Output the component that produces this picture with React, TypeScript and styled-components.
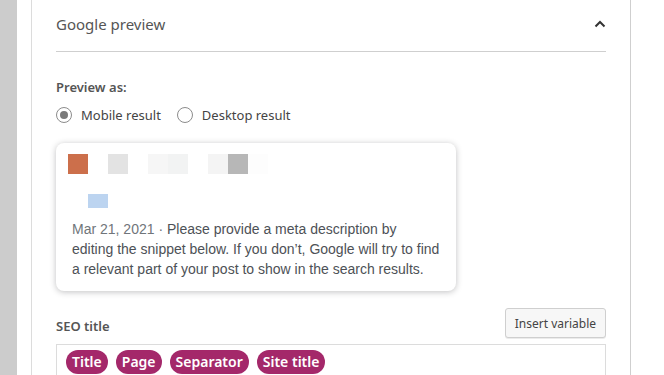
import React from "react";
import styled, { createGlobalStyle } from "styled-components";

const Global = createGlobalStyle`
  html, body { margin: 0; padding: 0; background: #fff; }
  body { font-family: "Noto Sans", "Open Sans", sans-serif; }
`;

const Page = styled.div`
  display: flex;
  height: 375px;
  overflow: hidden;
  background: #fff;
`;

const SideBar = styled.div`
  width: 17px;
  flex: none;
  background: #cccccc;
`;

const Gap = styled.div`
  width: 14px;
  flex: none;
`;

const Panel = styled.div`
  flex: none;
  border-left: 1px solid #dcdcdc;
  border-right: 1px solid #cfcfcf;
  padding: 0 24px;
  box-sizing: content-box;
  width: 550px;
`;

const Header = styled.div`
  height: 48px;
  display: flex;
  align-items: center;
  justify-content: space-between;
  border-bottom: 1px solid #cfcfcf;
  padding-bottom: 3px;
`;

const HeaderTitle = styled.h2`
  margin: 0;
  font-size: 15px;
  font-weight: 400;
  color: #555;
`;

const Label = styled.div`
  font-size: 13px;
  font-weight: 600;
  color: #555;
  line-height: 18px;
`;

const Section = styled.div<{ $top: number }>`
  margin-top: ${(p) => p.$top}px;
`;

const RadioRow = styled.div`
  display: flex;
  align-items: center;
  height: 20px;
  margin-top: 9px;
  gap: 16px;
`;

const RadioOption = styled.label`
  display: flex;
  align-items: center;
  gap: 9px;
  font-size: 13px;
  color: #444;
`;

const RadioCircle = styled.span<{ $checked?: boolean }>`
  width: 14px;
  height: 14px;
  border-radius: 50%;
  border: 1px solid #8c8c8c;
  display: flex;
  align-items: center;
  justify-content: center;
  &::after {
    content: "";
    width: 8px;
    height: 8px;
    border-radius: 50%;
    background: ${(p) => (p.$checked ? "#7a7a7a" : "transparent")};
  }
`;

const Card = styled.div`
  margin-top: 18px;
  width: 400px;
  box-sizing: border-box;
  border-radius: 8px;
  box-shadow: 0 1px 6px rgba(32, 33, 36, 0.28);
  padding: 11px 16px 12px 12px;
`;

const BlurRow = styled.div`
  display: flex;
  height: 20px;
`;

const Blur = styled.span<{ $c: string; $w?: number; $h?: number }>`
  width: ${(p) => p.$w ?? 20}px;
  height: ${(p) => p.$h ?? 20}px;
  background: ${(p) => p.$c};
  flex: none;
`;

const BlurRow2 = styled.div`
  display: flex;
  margin-top: 20px;
  padding-left: 20px;
`;

const Snippet = styled.p`
  margin: 11px 0 0 4px;
  font-family: "Liberation Sans", Arial, sans-serif;
  font-size: 14px;
  line-height: 20px;
  color: #4d5156;
`;

const DateText = styled.span`
  color: #70757a;
`;

const TitleRow = styled.div`
  margin-top: 17px;
  display: flex;
  align-items: center;
  justify-content: space-between;
`;

const SeoLabel = styled(Label)`
  margin-top: 6px;
`;

const InsertButton = styled.button`
  height: 30px;
  padding: 0 9px;
  font-family: inherit;
  font-size: 12px;
  color: #444;
  background: #f7f7f7;
  border: 1px solid #cfcfcf;
  border-radius: 3px;
  box-shadow: 0 1px 0 rgba(0, 0, 0, 0.08);
`;

const InputBox = styled.div`
  margin-top: 6px;
  border: 1px solid #dcdcdc;
  padding: 5px 9px;
  display: flex;
  gap: 8px;
  height: 40px;
`;

const Pill = styled.span`
  height: 24px;
  line-height: 24px;
  padding: 0 6px;
  border-radius: 12px;
  background: #a4286a;
  color: #fff;
  font-size: 14px;
  font-weight: 600;
`;

export default function App() {
  return (
    <>
      <Global />
      <Page>
        <SideBar />
        <Gap />
        <Panel>
          <Header>
            <HeaderTitle>Google preview</HeaderTitle>
            <svg width="12" height="8" viewBox="0 0 12 8">
              <path d="M1.5 6.5 L6 2 L10.5 6.5" fill="none" stroke="#333" strokeWidth="2" />
            </svg>
          </Header>
          <Section $top={26}>
            <Label>Preview as:</Label>
          </Section>
          <RadioRow>
            <RadioOption>
              <RadioCircle $checked />
              Mobile result
            </RadioOption>
            <RadioOption>
              <RadioCircle />
              Desktop result
            </RadioOption>
          </RadioRow>
          <Card>
            <BlurRow>
              <Blur $c="#cc6f4b" />
              <Blur $c="#fff" />
              <Blur $c="#e3e3e3" />
              <Blur $c="#fff" />
              <Blur $c="#f6f6f6" />
              <Blur $c="#f2f3f3" />
              <Blur $c="#fff" />
              <Blur $c="#f4f4f4" />
              <Blur $c="#b7b7b7" />
              <Blur $c="#fdfdfd" />
            </BlurRow>
            <BlurRow2>
              <Blur $c="#bcd4f0" $h={14} />
            </BlurRow2>
            <Snippet>
              <DateText>Mar 21, 2021 · </DateText>Please provide a meta description by editing the
              snippet below. If you don’t, Google will try to find a relevant part of your post to
              show in the search results.
            </Snippet>
          </Card>
          <TitleRow>
            <SeoLabel>SEO title</SeoLabel>
            <InsertButton>Insert variable</InsertButton>
          </TitleRow>
          <InputBox>
            <Pill>Title</Pill>
            <Pill>Page</Pill>
            <Pill>Separator</Pill>
            <Pill>Site title</Pill>
          </InputBox>
        </Panel>
      </Page>
    </>
  );
}
